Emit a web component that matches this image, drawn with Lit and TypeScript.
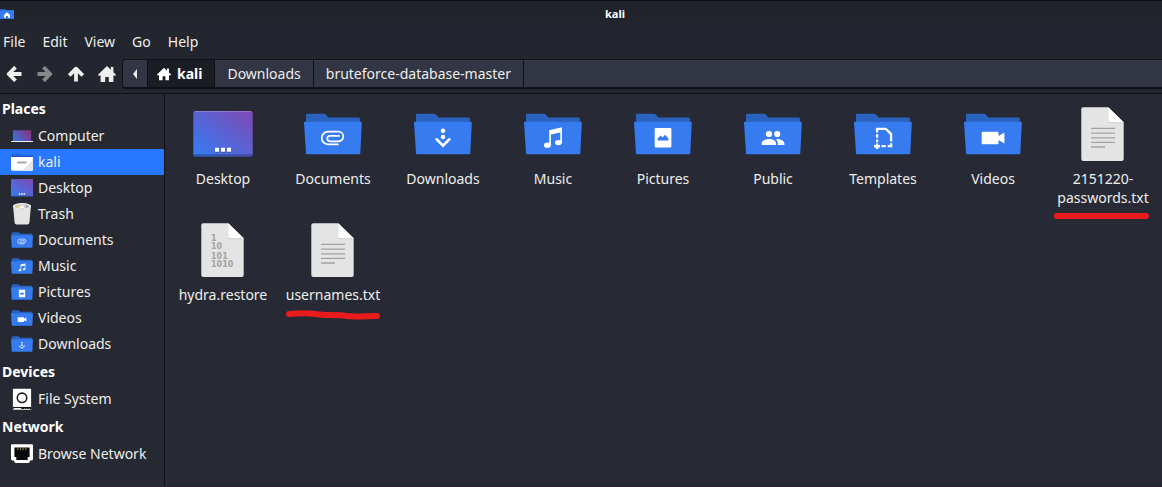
import { LitElement, html, svg, css } from "lit";
import { customElement, property, state } from "lit/decorators.js";

type Glyph = ReturnType<typeof svg>;

const glyphs: Record<string, Glyph> = {
  documents: svg`<path d="M37 42.3H27a6.3 6.3 0 0 1 0-12.6h10.5a4.8 4.8 0 0 1 0 9.6H29a2.7 2.7 0 0 1 0-5.4h9" fill="none" stroke="#fff" stroke-width="1.7" stroke-linecap="round"/>`,
  downloads: svg`<circle cx="32" cy="28.7" r="2.3" fill="#fff"/><circle cx="32" cy="35" r="2.3" fill="#fff"/><path d="M25.6 37.3 32 43.6l6.4-6.3" fill="none" stroke="#fff" stroke-width="2.6" stroke-linecap="round"/>`,
  music: svg`<ellipse cx="26.4" cy="43.2" rx="3.4" ry="2.7" fill="#fff"/><ellipse cx="37.4" cy="40.6" rx="3.4" ry="2.7" fill="#fff"/><path d="M28.2 28.2 41 25.2v15.6h-1.7V30.4l-9.4 2.2v11h-1.7z" fill="#fff"/>`,
  pictures: svg`<rect x="23.7" y="26" width="16.7" height="19.6" rx="1" fill="#fff"/><path d="M26.6 38.4v-1.8l3-3.2 2 2 2.5-2.6 3.3 3.8v1.8z" fill="#367bf0"/>`,
  public: svg`<g fill="#fff"><circle cx="28" cy="32" r="3.1"/><circle cx="36.2" cy="32" r="3.1"/><path d="M20.7 43v-1.6c0-3 4.2-4.4 7.2-4.4s7.2 1.4 7.2 4.4V43zM35 37c3.5-.3 8.4 1.3 8.4 4.4V43h-6.6v-1.6c0-1.9-.8-3.3-1.8-4.4z"/></g>`,
  templates: svg`<g fill="none" stroke="#fff" stroke-width="2.3"><path d="M26.1 30.4v-3.6h8.6l5.4 5.3v7.5M40.1 41.2v3h-3.4M26.1 32.2v3.6M26.1 37.6v2.6M30.4 44.2h4.4"/><path d="M23 44.2h6M26.1 41.400V46.900" stroke-width="2.4"/></g>`,
  videos: svg`<path d="M21.7 29.7h14.8q1 0 1 1v3.3l5.9-3.5v11l-5.9-3.5v3.3q0 1-1 1H21.7q-1 0-1-1V30.7q0-1 1-1z" fill="#fff"/>`,
};

function folder(glyph: string): Glyph {
  return svg`
    <path d="M5 22v-9.2q0-1 1-1h17q1 0 1.7.8l2.8 2.9h30q1.500 0 1.500 1.500V22z" fill="#2a62c0"/>
    <path d="M3.8 19.7h56.200q.9 0 .8 1L59.300 51.300q0 1-1 1H6q-1 0-1-1L3 20.700q0-1 .8-1z" fill="#367bf0"/>
    ${glyphs[glyph]}`;
}

function page(content: Glyph): Glyph {
  return svg`
    <path d="M12.3 5.3h25L52.7 20.3V57q0 2-2 2H12.3q-2 0-2-2V7.3q0-2 2-2z" fill="#e4e4e4"/>
    <path d="M37.3 6.5 52.5 21.2H39.3q-2 0-2-2z" fill="#c9c9c9"/>
    <path d="M37.3 5.3 52.7 20.3H39.3q-2 0-2-2z" fill="#fff"/>
    ${content}`;
}

function picture(name: string): Glyph {
  switch (name) {
    case "desktop":
      return svg`
        <defs><linearGradient id="desk" x1="0" y1="1" x2="1" y2="0"><stop offset="0.05" stop-color="#367bf0"/><stop offset="1" stop-color="#8048b4"/></linearGradient></defs>
        <rect x="2.3" y="9" width="59.4" height="45.7" rx="2" fill="url(#desk)"/>
        <path d="M2.3 52.3h59.4v.4q0 2-2 2H4.3q-2 0-2-2z" fill="#20244a" opacity=".4"/>
        <path d="M4 9.4h56" stroke="#fff" stroke-width=".8" opacity=".3"/>
        <path d="M24 46.7h4v4h-4zM30 46.7h4v4h-4zM36 46.7h4v4h-4z" fill="#222" opacity=".35"/>
        <path d="M24 45.7h4v4h-4zM30 45.7h4v4h-4zM36 45.7h4v4h-4z" fill="#fff"/>`;
    case "text":
      return page(svg`<path d="M20 26.4h24M20 31.2h24M20 35.9h24M20 40.4h24M20 45h14" stroke="#a0a2a0" stroke-width="1.3"/>`);
    case "binary":
      return page(svg`<g fill="#a3a3a3" font-family="DejaVu Sans" font-weight="700" font-size="8"><text x="20" y="23">1</text><text x="20" y="31">10</text><text x="20" y="41">101</text><text x="20" y="49">1010</text></g>`);
    case "computer":
      return svg`
        <defs><linearGradient id="comp" x1="0" y1=".7" x2="1" y2=".2"><stop offset="0" stop-color="#3c70dd"/><stop offset="1" stop-color="#8c3180"/></linearGradient></defs>
        <rect x="8" y="17" width="48" height="28" fill="url(#comp)"/><path d="M3 46.5h58" stroke="#f4f4f6" stroke-width="2.8"/>`;
    case "home":
      return svg`
        <path d="M5 20V9.5h20l4 4h30V20z" fill="#2468e0"/><path d="M5 15h55v4H3z" fill="#1f57c4"/>
        <path d="M3 19h58v33q0 3-3 3H6q-3 0-3-3z" fill="#fff"/><path d="M61 24v28q0 3-3 3H34z" fill="#e6e6e6"/>
        <rect x="19" y="31" width="26" height="5" rx="2.5" fill="#aaa"/>`;
    case "trash":
      return svg`
        <path d="M8.5 11h47l-4 44q-1 4-5 4.5h-29q-4-.5-5-4.5z" fill="#e4e4e4"/><ellipse cx="32" cy="11" rx="24" ry="8" fill="#f5f5f5"/>
        <ellipse cx="32" cy="12" rx="20" ry="6" fill="#c8c8c8"/><path d="M16 13l8-4 6 5-6 3z" fill="#f0d465"/><path d="M24 16l8-8 8 9z" fill="#fff"/><path d="M42 9l7 3-4 4z" fill="#4aa8a0"/>`;
    case "disk":
      return svg`
        <rect x="8" y="5" width="48" height="56" rx="2" fill="#fff"/><circle cx="32" cy="29" r="12.5" fill="#fff" stroke="#17191e" stroke-width="4"/>
        <path d="M8 53h48v6H8z" fill="#0c0d10"/><path d="M10 57h20" stroke="#fff" stroke-width="3"/><path d="M37 57h3M43 57h3M49 57h3" stroke="#aaa" stroke-width="2"/>`;
    case "network":
      return svg`
        <path d="M6 6h52q3 0 3 3v36q0 4-4 4h-4q0 7-5 7H16q-5 0-5-7H7q-4 0-4-4V9q0-3 3-3z" fill="#fff"/>
        <path d="M12 15h40v25h-5v8H17v-8h-5z" fill="#08090b"/><path d="M21 14v8M28 14v8M35 14v8M42 14v8" stroke="#9c8542" stroke-width="2.5"/>`;
    default:
      return folder(name);
  }
}

interface Place { label: string; icon: string; }
interface Entry { label: string; icon: string; mark?: string; }

const sections: { title: string; places: Place[] }[] = [
  {
    title: "Places",
    places: [
      { label: "Computer", icon: "computer" },
      { label: "kali", icon: "home" },
      { label: "Desktop", icon: "desktop" },
      { label: "Trash", icon: "trash" },
      { label: "Documents", icon: "documents" },
      { label: "Music", icon: "music" },
      { label: "Pictures", icon: "pictures" },
      { label: "Videos", icon: "videos" },
      { label: "Downloads", icon: "downloads" },
    ],
  },
  { title: "Devices", places: [{ label: "File System", icon: "disk" }] },
  { title: "Network", places: [{ label: "Browse Network", icon: "network" }] },
];

const entries: Entry[] = [
  { label: "Desktop", icon: "desktop" },
  { label: "Documents", icon: "documents" },
  { label: "Downloads", icon: "downloads" },
  { label: "Music", icon: "music" },
  { label: "Pictures", icon: "pictures" },
  { label: "Public", icon: "public" },
  { label: "Templates", icon: "templates" },
  { label: "Videos", icon: "videos" },
  { label: "2151220-passwords.txt", icon: "text", mark: "M9 7H98" },
  { label: "hydra.restore", icon: "binary" },
  { label: "usernames.txt", icon: "text", mark: "M11 8C22 7 30 7 38 8C48 10 58 8 68 10C78 11 88 10 99 10" },
];

@customElement("file-icon")
class FileIcon extends LitElement {
  @property() name = "";

  static styles = css`
    :host { display: block; flex: none; }
    svg { display: block; width: 100%; height: 100%; }
  `;

  render() {
    return html`<svg viewBox=${this.hasAttribute("small") ? "3 3 58 58" : "0 0 64 64"} aria-hidden="true">${picture(this.name)}</svg>`;
  }
}

@customElement("app-root")
class AppRoot extends LitElement {
  @state() private current = "kali";

  static styles = css`
    :host {
      display: flex;
      flex-direction: column;
      min-height: 100vh;
      box-sizing: border-box;
      background: #272a34;
      border-bottom: 1px solid #2e2232;
      color: #eeeeec;
      font: 14px/20px "Noto Sans", sans-serif;
    }
    button { font: inherit; color: inherit; border: 0; background: none; padding: 0; }
    a { color: inherit; text-decoration: none; }
    svg { display: block; flex: none; }
    .chrome {
      background: linear-gradient(#1f2129, #23262e 28px);
      border-top: 1px solid #0e0f13;
      border-bottom: 1px solid #0f1014;
    }
    .title {
      display: grid;
      grid-template-columns: 68px 1fr;
      align-items: center;
      height: 26px;
    }
    .title h1 { margin: 0; text-align: center; font-size: 11px; line-height: 16px; font-weight: 700; color: #fff; }
    .menu { display: flex; gap: 17px; padding: 5px 3px 3px; }
    .tools { display: flex; align-items: center; padding-top: 4px; padding-bottom: 4px; }
    .nav { display: flex; gap: 4px; width: 122px; }
    .nav button { display: grid; place-items: center; width: 27px; height: 28px; }
    .nav button:disabled { color: #85878a; }
    .path {
      display: flex;
      flex: 1;
      height: 27px;
      border: 1px solid #0f1116;
      border-right: 0;
      border-bottom-width: 2px;
      border-radius: 4px 0 0 4px;
      background: #323543;
      box-shadow: inset 0 1px #3a3d49;
    }
    .path button {
      display: flex;
      align-items: center;
      gap: 6px;
      padding: 0 12px;
      border-right: 1px solid #0f1116;
    }
    .path .back { padding: 0 8px; }
    .path .active { padding: 0 12px 0 9px; background: #1b1d24; font-weight: 700; color: #fff; }
    .body { display: flex; flex: 1; }
    .side { width: 164px; flex: none; border-right: 1px solid #0f1014; background: #272932; }
    .side h2 { margin: 0; padding: 5px 2px 4px; font-size: 14px; line-height: 20px; font-weight: 700; color: #fff; }
    .side a { display: flex; align-items: center; gap: 5px; height: 26px; padding-left: 11px; }
    .side a.on { background: #2777ff; }
    .side file-icon { width: 22px; height: 22px; }
    .files {
      flex: 1;
      display: grid;
      grid-template-columns: repeat(auto-fill, 110px);
      grid-auto-rows: 116px;
      align-content: start;
      padding: 8px 0 0 3px;
    }
    .file { position: relative; display: flex; flex-direction: column; align-items: center; gap: 3px; }
    .file file-icon { width: 64px; height: 64px; }
    .label { width: 100px; line-height: 19px; text-align: center; }
    .mark { position: absolute; left: 0; top: 100%; }
    .caption { position: relative; width: 110px; display: flex; justify-content: center; }
  `;

  render() {
    return html`
      <header class="chrome">
        <div class="title">
          <svg width="15" height="12" viewBox="0 0 15 12" aria-hidden="true"><path d="M0 1h5l1 1h8v4H0z" fill="#2a62c0"/><path d="M0 2.500h14V11H0z" fill="#367bf0"/><path d="M4 7 7 4.300 10 7V9.800H8V8H6v1.800H4z" fill="#fff"/></svg>
          <h1>kali</h1>
        </div>
        <nav class="menu" aria-label="Menu">
          ${["File", "Edit", "View", "Go", "Help"].map((m) => html`<button>${m}</button>`)}
        </nav>
        <div class="tools">
          <div class="nav">
            <button aria-label="Back">${this.arrow(0)}</button>
            <button aria-label="Forward" disabled>${this.arrow(180)}</button>
            <button aria-label="Up">${this.arrow(90)}</button>
            <button aria-label="Home">${this.house(18)}</button>
          </div>
          <nav class="path" aria-label="Path">
            <button class="back" aria-label="Scroll path"><svg width="8" height="12" viewBox="0 0 8 12"><path d="M6 1v10L2 6z" fill="currentColor"/></svg></button>
            <button class="active">${this.house(14)}kali</button>
            <button>Downloads</button>
            <button>bruteforce-database-master</button>
          </nav>
        </div>
      </header>
      <div class="body">
        <aside class="side">
          ${sections.map((s) => html`
            <h2>${s.title}</h2>
            ${s.places.map((p) => html`
              <a href="#" class=${p.label === this.current ? "on" : ""} @click=${(e: Event) => { e.preventDefault(); this.current = p.label; }}>
                <file-icon small name=${p.icon}></file-icon>${p.label}
              </a>`)}
          `)}
        </aside>
        <main class="files">
          ${entries.map((f) => html`
            <button class="file">
              <file-icon name=${f.icon}></file-icon>
              <span class="caption">
                <span class="label">${f.label}</span>
                ${f.mark ? html`<svg class="mark" width="110" height="16" viewBox="0 -2 110 16" aria-hidden="true"><path d=${f.mark} fill="none" stroke="#e81c1c" stroke-width="6" stroke-linecap="round"/></svg>` : ""}
              </span>
            </button>`)}
        </main>
      </div>
    `;
  }

  private arrow(turn: number) {
    return html`<svg width="16" height="16" viewBox="0 0 16 16" aria-hidden="true"><g transform="rotate(${turn} 8 8)" fill="none" stroke="currentColor" stroke-width="3.8" stroke-linejoin="round"><path d="M9.5 1.2 2.7 8l6.8 6.8M3 8h12.5"/></g></svg>`;
  }

  private house(size: number) {
    return html`<svg width=${size} height=${size} viewBox="0 0 18 18" aria-hidden="true"><path d="M9 1 0 9.8V10.6h2.6V17h4.6v-5h3.6v5h4.6V10.6H18V9.8L15.4 7.2V2h-2.6v2.7z" fill="currentColor"/></svg>`;
  }
}
